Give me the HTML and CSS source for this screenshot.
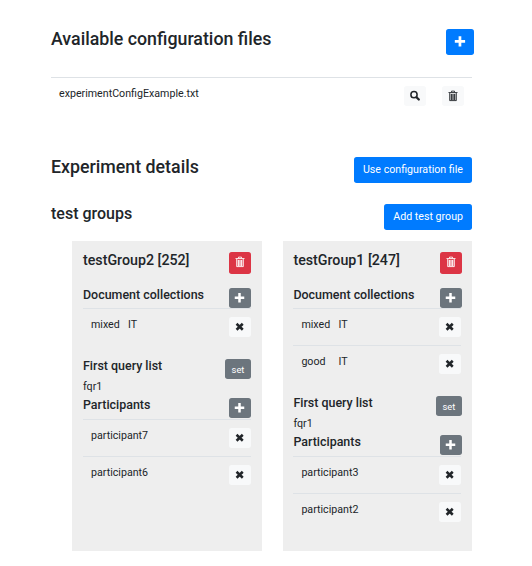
FILE: index.html
```html
<!DOCTYPE html>
<html lang="en">
<head>
<meta charset="utf-8">
<title>Experiment configuration</title>
<link rel="stylesheet" href="styles.css">
</head>
<body>
<svg width="0" height="0" class="sprite">
  <symbol id="plus" viewBox="0 0 12 12"><path d="M5.500 2.300v7M2 5.800h7" stroke="currentColor" stroke-width="2.500" fill="none" stroke-linecap="square"/></symbol>
  <symbol id="times" viewBox="0 0 12 12"><path d="M3.500 3.700l4.300 4.100M7.800 3.700l-4.300 4.100" stroke="currentColor" stroke-width="2.600" fill="none" stroke-linecap="square"/></symbol>
  <symbol id="search" viewBox="0 0 12 12"><circle cx="5" cy="4.700" r="3.100" stroke="currentColor" stroke-width="1.500" fill="none"/><path d="M7.500 7.200l2.300 2.300" stroke="currentColor" stroke-width="2.300" stroke-linecap="round"/></symbol>
  <symbol id="trash" viewBox="0 0 12 12"><path d="M2.500 3.500h7v7.300h-7z" fill="currentColor" opacity=".3"/><path d="M1.500 2.500h9M4.500 2.200V1.100h3v1.100M2.700 3v7.600h6.600V3M4.500 4v6M6 4v6M7.500 4v6" stroke="currentColor" stroke-width=".85" fill="none" stroke-linejoin="round"/></symbol>
</svg>
<main>
  <header class="bar files-bar"><h2>Available configuration files</h2><button class="btn primary add"><svg><use href="#plus"/></svg></button></header>
  <div class="file row"><span class="name">experimentConfigExample.txt</span><button class="btn light"><svg><use href="#search"/></svg></button><button class="btn light"><svg><use href="#trash"/></svg></button></div>
  <header class="bar details-bar"><h2>Experiment details</h2><button class="btn primary">Use configuration file</button></header>
  <header class="bar groups-bar"><h3>test groups</h3><button class="btn primary">Add test group</button></header>
  <div class="groups">
    <section class="card">
      <div class="head title"><h4>testGroup2 [252]</h4><button class="btn danger"><svg><use href="#trash"/></svg></button></div>
      <div class="head"><h5>Document collections</h5><button class="btn grey"><svg><use href="#plus"/></svg></button></div>
      <div class="row"><span class="doc">mixed</span><span class="name">IT</span><button class="btn light"><svg><use href="#times"/></svg></button></div>
      <div class="head query"><h5>First query list</h5><button class="btn grey set">set</button></div>
      <p>fqr1</p>
      <div class="head people"><h5>Participants</h5><button class="btn grey"><svg><use href="#plus"/></svg></button></div>
      <div class="row"><span class="name">participant7</span><button class="btn light"><svg><use href="#times"/></svg></button></div>
      <div class="row"><span class="name">participant6</span><button class="btn light"><svg><use href="#times"/></svg></button></div>
    </section>
    <section class="card">
      <div class="head title"><h4>testGroup1 [247]</h4><button class="btn danger"><svg><use href="#trash"/></svg></button></div>
      <div class="head"><h5>Document collections</h5><button class="btn grey"><svg><use href="#plus"/></svg></button></div>
      <div class="row"><span class="doc">mixed</span><span class="name">IT</span><button class="btn light"><svg><use href="#times"/></svg></button></div>
      <div class="row"><span class="doc">good</span><span class="name">IT</span><button class="btn light"><svg><use href="#times"/></svg></button></div>
      <div class="head query"><h5>First query list</h5><button class="btn grey set">set</button></div>
      <p>fqr1</p>
      <div class="head people"><h5>Participants</h5><button class="btn grey"><svg><use href="#plus"/></svg></button></div>
      <div class="row"><span class="name">participant3</span><button class="btn light"><svg><use href="#times"/></svg></button></div>
      <div class="row"><span class="name">participant2</span><button class="btn light"><svg><use href="#times"/></svg></button></div>
    </section>
  </div>
</main>
</body>
</html>
```
FILE: styles.css
```css
* { box-sizing: border-box; }
body { margin: 0; background: #fff; color: #212529; font: 400 10.67px/16px Roboto, sans-serif; }
h2, h3, h4, h5, p { margin: 0; font-weight: 500; }
h2 { font-size: 17.8px; line-height: 22px; }
h3 { font-size: 16px; line-height: 20px; }
h4 { font-size: 14.22px; line-height: 18px; }
h5 { font-size: 12.44px; line-height: 15px; margin-top: -1px; }
p { font-weight: 400; height: 16px; }
.sprite { display: block; height: 0; }
main { width: 421px; margin-left: 51px; padding-top: 28px; }
.bar { display: flex; justify-content: space-between; align-items: flex-start; }
.files-bar { height: 49px; }
.files-bar .btn { margin: 1px -2px 0 0; }
.details-bar { height: 47px; margin-top: 43px; }
.details-bar h2 { margin-top: -1px; }
.groups-bar { height: 37px; }
.btn { display: flex; align-items: center; justify-content: center; flex: none; height: 20px; width: 22px; padding: 0; border: 0; border-radius: 2.7px; font: 400 10.67px/16px Roboto, sans-serif; color: #fff; }
.btn svg { width: 12px; height: 12px; display: block; }
.primary { background: #007bff; height: 26px; width: auto; padding: 0 9px 1px; }
.add { width: 28px; padding: 0 0 1px; }
.add svg { width: 13px; height: 13px; }
.light { background: #f8f9fa; color: #212529; }
.danger { background: #dc3545; height: 22px; padding-bottom: 2px; }
.grey { background: #6c757d; }
.set { width: 26px; font-size: 9.33px; padding-top: 1px; }
.row { display: flex; align-items: flex-start; height: 37px; border-top: 1px solid #dee2e6; padding: 8px 0 0 8px; }
.row .name { flex: 1; }
.doc { width: 37px; }
.file { padding-right: 8px; gap: 16px; }
.file .btn { padding-bottom: 1px; }
.groups { display: grid; grid-template-columns: 190px 189px; column-gap: 21px; margin-left: 21px; }
.card { height: 310px; background: #eee; padding: 11px 11px 0; }
.card + .card { padding: 11px 10.6px 0 10.4px; }
.head { display: flex; justify-content: space-between; align-items: flex-start; height: 20px; }
.card + .card .head { margin-right: -.4px; }
.title { height: 36px; }
.title h4 { margin-top: -1px; }
.query { margin-top: 14px; }
.people { height: 21px; margin-top: 3px; }
```
